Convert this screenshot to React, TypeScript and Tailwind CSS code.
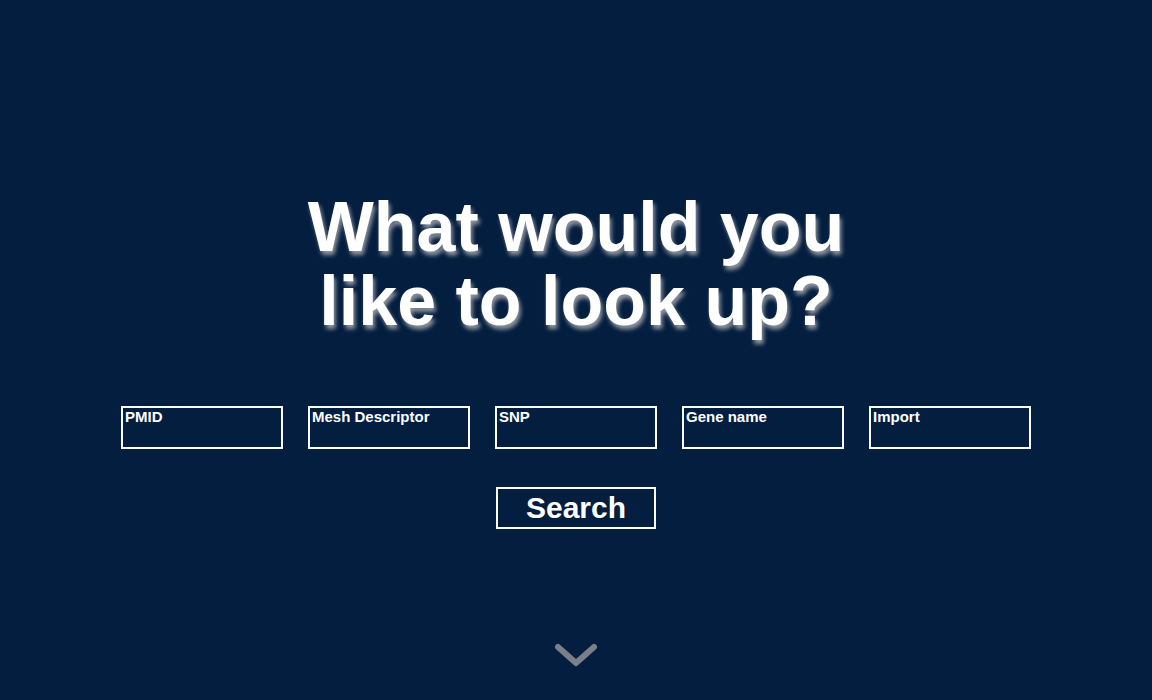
const FIELDS = ['PMID', 'Mesh Descriptor', 'SNP', 'Gene name', 'Import']

export default function App() {
  return (
    <div className="h-[700px] w-full bg-[#041e40] flex flex-col items-center font-['Liberation_Sans',Arial,sans-serif] text-white overflow-hidden">
      <h1 className="mt-[190px] text-center font-bold text-[70px] leading-[74px] [text-shadow:2px_4px_4px_rgba(190,190,190,0.75)]">
        What would you
        <br />
        like to look up?
      </h1>

      <div className="mt-[68px] flex gap-[25px]">
        {FIELDS.map((f) => (
          <div
            key={f}
            className="w-[162px] h-[43px] border-2 border-white px-[2px] text-[15px] font-bold leading-[17px]"
          >
            {f}
          </div>
        ))}
      </div>

      <button
        type="button"
        className="mt-[38px] w-[160px] h-[42px] border-2 border-white text-[30px] font-bold leading-none flex items-center justify-center"
      >
        Search
      </button>

      <svg className="mt-[112px]" width="44" height="28" viewBox="0 0 44 28">
        <polyline
          points="4,6 22,22 40,6"
          fill="none"
          stroke="#7a7f88"
          strokeWidth="6"
          strokeLinecap="round"
          strokeLinejoin="round"
        />
      </svg>
    </div>
  )
}
